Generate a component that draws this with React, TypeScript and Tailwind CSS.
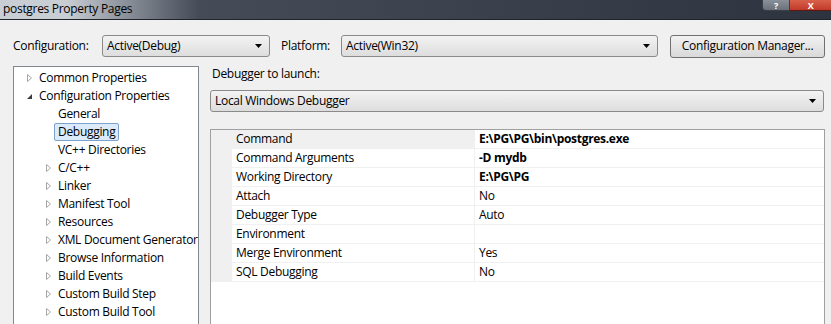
import React from 'react';

const treeItems: { label: string; level: 0 | 1; state: 'collapsed' | 'expanded' | 'none'; selected?: boolean }[] = [
  { label: 'Common Properties', level: 0, state: 'collapsed' },
  { label: 'Configuration Properties', level: 0, state: 'expanded' },
  { label: 'General', level: 1, state: 'none' },
  { label: 'Debugging', level: 1, state: 'none', selected: true },
  { label: 'VC++ Directories', level: 1, state: 'none' },
  { label: 'C/C++', level: 1, state: 'collapsed' },
  { label: 'Linker', level: 1, state: 'collapsed' },
  { label: 'Manifest Tool', level: 1, state: 'collapsed' },
  { label: 'Resources', level: 1, state: 'collapsed' },
  { label: 'XML Document Generator', level: 1, state: 'collapsed' },
  { label: 'Browse Information', level: 1, state: 'collapsed' },
  { label: 'Build Events', level: 1, state: 'collapsed' },
  { label: 'Custom Build Step', level: 1, state: 'collapsed' },
  { label: 'Custom Build Tool', level: 1, state: 'collapsed' },
];

const properties: { name: string; value: string; bold?: boolean }[] = [
  { name: 'Command', value: 'E:\\PG\\PG\\bin\\postgres.exe', bold: true },
  { name: 'Command Arguments', value: '-D mydb', bold: true },
  { name: 'Working Directory', value: 'E:\\PG\\PG', bold: true },
  { name: 'Attach', value: 'No' },
  { name: 'Debugger Type', value: 'Auto' },
  { name: 'Environment', value: '' },
  { name: 'Merge Environment', value: 'Yes' },
  { name: 'SQL Debugging', value: 'No' },
];

const font = { fontFamily: '"Segoe UI", "Open Sans", "Noto Sans", sans-serif' };

const Arrow = () => (
  <svg width="7" height="4" viewBox="0 0 7 4" className="shrink-0">
    <path d="M0 0 H7 L3.5 4 Z" fill="#000" />
  </svg>
);

const Combo = ({ value, className }: { value: string; className: string }) => (
  <div
    className={`h-[22px] shrink-0 flex items-center justify-between pl-[4px] pr-[7px] rounded-[3px] border border-[#8a8a8a] bg-gradient-to-b from-[#f3f3f3] to-[#dddddd] ${className}`}
  >
    <span className="leading-none">{value}</span>
    <Arrow />
  </div>
);

const Expander = ({ state }: { state: 'collapsed' | 'expanded' | 'none' }) => {
  if (state === 'collapsed')
    return (
      <svg width="7" height="8" viewBox="0 0 7 8" className="shrink-0">
        <path d="M1.5 0.5 L5.5 4 L1.5 7.5 Z" fill="#fff" stroke="#a6a6a6" strokeWidth="1" />
      </svg>
    );
  if (state === 'expanded')
    return (
      <svg width="7" height="8" viewBox="0 0 7 8" className="shrink-0">
        <path d="M6 2 L6 7 L1 7 Z" fill="#3c3c3c" />
      </svg>
    );
  return <span className="w-[7px] shrink-0" />;
};

const TreeRow = ({ item }: { item: (typeof treeItems)[number] }) => (
  <div className={`h-[18px] flex items-center whitespace-nowrap ${item.level === 0 ? 'pl-[12px]' : 'pl-[31px]'}`}>
    <Expander state={item.state} />
    <span
      className={`ml-[2px] h-[18px] flex items-center px-[3px] rounded-[2px] border ${
        item.selected ? 'border-[#7da2ce] bg-[#dcebfc]' : 'border-transparent'
      }`}
    >
      {item.label}
    </span>
  </div>
);

export default function App() {
  return (
    <div
      className="w-[831px] h-[324px] overflow-hidden flex flex-col bg-[#f0f0f0] text-[12px] tracking-[-0.3px] text-black"
      style={font}
    >
      {/* title bar */}
      <div className="h-[20px] shrink-0 flex items-start justify-between bg-gradient-to-r from-[#c9ced4] from-[8%] via-[#454b57] via-[24%] to-[#2d3440] border-b border-[#1f242c]">
        <div className="pl-[3px] pt-[1px] leading-[16px] text-[#000]">postgres Property Pages</div>
        <div className="flex h-[11px]">
          <div className="w-[28px] h-[11px] flex items-end justify-center rounded-bl-[4px] border border-t-0 border-[#3a3f48] bg-gradient-to-b from-[#8a9099] to-[#6b717b] text-white text-[9px] leading-[9px] font-bold">
            ?
          </div>
          <div className="w-[41px] h-[11px] flex items-end justify-center border-b border-[#5a1a10] bg-gradient-to-b from-[#d9604a] to-[#c0392b] text-white text-[9px] leading-[9px] font-bold">
            X
          </div>
        </div>
      </div>

      {/* body */}
      <div className="flex-1 flex flex-col pl-[13px] pr-[6px] pt-[15px] min-h-0">
        <div className="h-[22px] flex items-center whitespace-nowrap">
          <span className="w-[89px] shrink-0">Configuration:</span>
          <Combo value="Active(Debug)" className="w-[168px]" />
          <span className="ml-[11px] w-[60px] shrink-0">Platform:</span>
          <Combo value="Active(Win32)" className="w-[317px]" />
          <button className="ml-[12px] w-[155px] shrink-0 h-[23px] rounded-[3px] border border-[#707070] bg-gradient-to-b from-[#f2f2f2] to-[#d9d9d9] leading-none">
            Configuration Manager...
          </button>
        </div>

        <div className="flex-1 flex mt-[9px] min-h-0">
          <div className="w-[186px] shrink-0 border border-b-0 border-[#828790] bg-white pt-[2px]">
            {treeItems.map((item) => (
              <TreeRow key={item.label} item={item} />
            ))}
          </div>

          <div className="ml-[11px] flex-1 flex flex-col min-w-0">
            <div className="pl-[2px] leading-[16px]">Debugger to launch:</div>
            <Combo value="Local Windows Debugger" className="mt-[8px] mr-[1px]" />
            <div className="mt-[17px] flex-1 border border-b-0 border-[#a0a0a0] bg-white">
              <div className="flex">
                <div className="w-[21px] shrink-0 bg-[#f0f0f0]" />
                <div className="flex-1 whitespace-nowrap">
                  {properties.map((p, i) => (
                    <div key={p.name} className="h-[19px] flex border-b border-[#f0f0f0]">
                      <div
                        className={`w-[243px] shrink-0 pl-[4px] flex items-center border-r border-[#f0f0f0] ${
                          i === 0 ? 'bg-[#f0f0f0]' : ''
                        }`}
                      >
                        {p.name}
                      </div>
                      <div className={`flex-1 pl-[4px] flex items-center ${p.bold ? 'font-bold' : ''}`}>{p.value}</div>
                    </div>
                  ))}
                </div>
              </div>
            </div>
          </div>
        </div>
      </div>
    </div>
  );
}
